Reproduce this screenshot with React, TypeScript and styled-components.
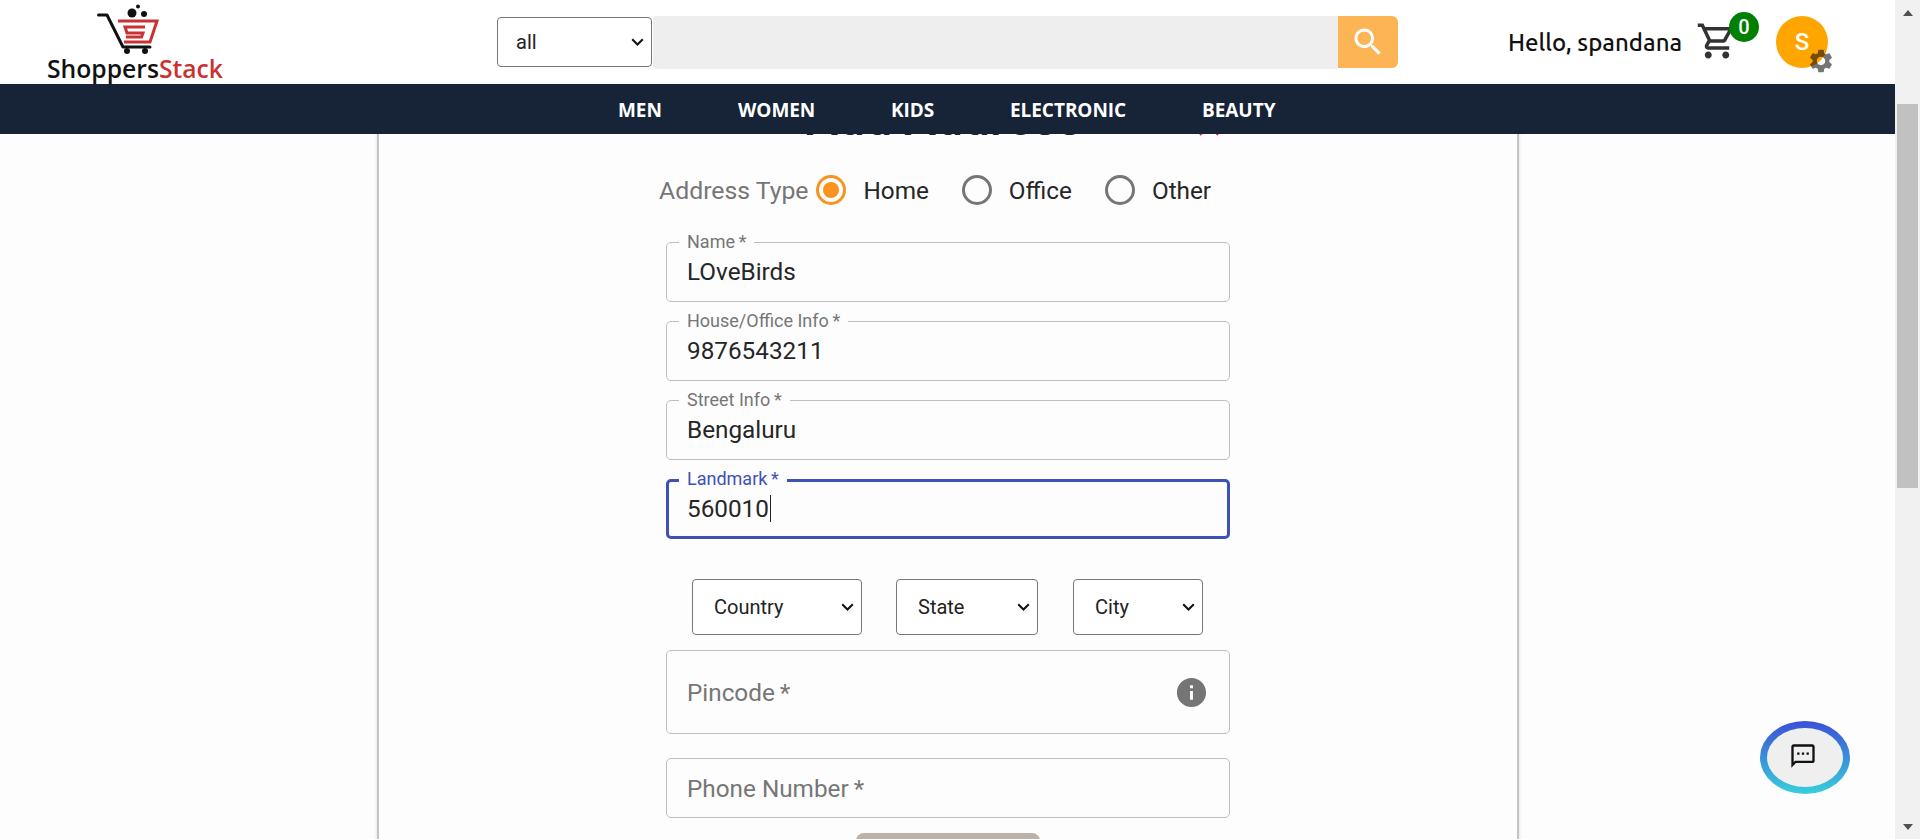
import React from "react";
import styled, { createGlobalStyle } from "styled-components";

const chevron =
  "url(\"data:image/svg+xml,%3Csvg xmlns='http://www.w3.org/2000/svg' width='13' height='8' viewBox='0 0 13 8'%3E%3Cpath d='M1.2 1.2 6.5 6.5 11.8 1.2' fill='none' stroke='%23111' stroke-width='2'/%3E%3C/svg%3E\")";

const Global = createGlobalStyle`
  html, body { margin: 0; padding: 0; height: 100%; overflow: hidden; background: #fdfdfd; }
  * { box-sizing: border-box; }
  body { font-family: "Roboto", "Liberation Sans", sans-serif; }
`;

const Page = styled.div`
  display: flex;
  width: 1920px;
  height: 839px;
  overflow: hidden;
  position: relative;
`;
const Main = styled.div`
  flex: 1;
  min-width: 0;
  display: flex;
  flex-direction: column;
`;
const Header = styled.header`
  height: 84px;
  flex: none;
  background: #fff;
  display: flex;
  align-items: center;
`;
const LogoBox = styled.div`
  width: 224px;
  flex: none;
  margin-left: 23px;
  margin-right: 250px;
  display: flex;
  flex-direction: column;
  align-items: center;
`;
const LogoMark = styled.svg`
  width: 62px;
  height: 52px;
  margin-left: -14px;
  flex: none;
`;
const LogoText = styled.div`
  font-family: "Open Sans", sans-serif;
  font-weight: 600;
  font-size: 24.7px;
  line-height: 24px;
  color: #111;
  margin-top: 1px;
  white-space: nowrap;
`;
const LogoRed = styled.span`
  color: #c93232;
`;
const SearchWrap = styled.div`
  display: flex;
  align-items: center;
  width: 901px;
  margin-right: 110px;
  flex: none;
`;
const CategorySelect = styled.select`
  appearance: none;
  width: 155px;
  height: 50px;
  background: #fff ${chevron} no-repeat right 7px center;
  border: 1px solid #767676;
  border-radius: 4px;
  font-family: "Roboto", sans-serif;
  font-size: 20px;
  color: #222;
  padding-left: 18px;
  flex: none;
`;
const SearchInput = styled.div`
  flex: 1;
  height: 53px;
  background: #eeeeee;
  border-radius: 4px 0 0 4px;
  margin-left: 1px;
`;
const SearchButton = styled.button`
  width: 60px;
  height: 52px;
  border: 0;
  padding: 0;
  background: #fcb455;
  border-radius: 0 6px 6px 0;
  display: flex;
  align-items: center;
  justify-content: center;
  flex: none;
`;
const Hello = styled.div`
  font-family: "Ubuntu", "Noto Sans", sans-serif;
  font-size: 24px;
  font-weight: 500;
  color: #111;
  white-space: nowrap;
  width: 188px;
  flex: none;
`;
const CartBox = styled.div`
  position: relative;
  width: 42px;
  height: 42px;
  flex: none;
  margin-right: 38px;
  margin-top: -2px;
`;
const CartBadge = styled.div`
  position: absolute;
  left: 33px;
  top: -8px;
  width: 30px;
  height: 30px;
  border-radius: 50%;
  background: #008000;
  color: #fff;
  font-size: 20px;
  font-weight: 500;
  display: flex;
  align-items: center;
  justify-content: center;
`;
const Avatar = styled.div`
  position: relative;
  width: 52px;
  height: 52px;
  border-radius: 50%;
  background: #ffa500;
  color: #fff;
  font-size: 24px;
  font-weight: 500;
  display: flex;
  align-items: center;
  justify-content: center;
  flex: none;
`;
const GearIcon = styled.svg`
  position: absolute;
  left: 31px;
  top: 31px;
  width: 28px;
  height: 28px;
  fill: rgba(0, 0, 0, 0.54);
`;
const Nav = styled.nav`
  height: 50px;
  flex: none;
  background: #172337;
  display: flex;
  align-items: center;
  padding: 1px 0 0 618px;
  position: relative;
  z-index: 2;
`;
const NavItem = styled.a<{ $w: number }>`
  width: ${(p) => p.$w}px;
  flex: none;
  color: #fff;
  font-family: "Open Sans", sans-serif;
  font-weight: 700;
  font-size: 19px;
  letter-spacing: -0.05px;
  white-space: nowrap;
`;
const Content = styled.main`
  flex: 1;
  min-height: 0;
  overflow: hidden;
  background: #fdfdfd;
`;
const Card = styled.section`
  position: relative;
  width: 1142px;
  height: 900px;
  margin: -38px 0 0 377px;
  border: solid #c4c4c4;
  border-width: 0 2px;
  box-shadow: 0 0 3px rgba(0, 0, 0, 0.15);
  background: #fdfdfd;
  display: flex;
  flex-direction: column;
  align-items: center;
`;
const Title = styled.h2`
  margin: 0 8px 0 0;
  height: 46px;
  font-size: 48px;
  line-height: 46px;
  font-weight: 500;
  color: #222;
  white-space: nowrap;
`;
const CloseMark = styled.svg`
  position: absolute;
  left: 820px;
  top: 20px;
  width: 20px;
  height: 20px;
  stroke: #e91e63;
  stroke-width: 2;
  fill: none;
`;
const Form = styled.form`
  width: 564px;
  display: flex;
  flex-direction: column;
`;
const TypeRow = styled.div`
  display: flex;
  align-items: center;
  height: 40px;
  margin: 28px 0 0 -7px;
  font-size: 24.3px;
`;
const TypeLabel = styled.span`
  color: #767676;
  font-size: 24.8px;
  margin-right: 8px;
`;
const Radio = styled.span<{ $on?: boolean }>`
  width: 30px;
  height: 30px;
  border-radius: 50%;
  border: 3px solid ${(p) => (p.$on ? "#f7931e" : "#757575")};
  display: flex;
  align-items: center;
  justify-content: center;
  flex: none;
  &::after {
    content: "";
    display: ${(p) => (p.$on ? "block" : "none")};
    width: 16px;
    height: 16px;
    border-radius: 50%;
    background: #f7931e;
  }
`;
const RadioText = styled.span<{ $gap: number }>`
  color: #262626;
  margin: 0 ${(p) => p.$gap}px 0 17px;
`;
const Field = styled.div<{ $focus?: boolean; $h?: number; $mt: number }>`
  position: relative;
  margin-top: ${(p) => p.$mt}px;
  padding: 0 20px;
  height: ${(p) => p.$h ?? 60}px;
  border: ${(p) => (p.$focus ? "3px solid #3f51b5" : "1px solid #bfbfbf")};
  border-radius: 5px;
  display: flex;
  align-items: center;
`;
const FieldLabel = styled.label<{ $focus?: boolean }>`
  position: absolute;
  top: ${(p) => (p.$focus ? "-12px" : "-10px")};
  left: ${(p) => (p.$focus ? "10px" : "12px")};
  padding: 0 8px;
  background: #fdfdfd;
  font-size: 18px;
  line-height: 18px;
  color: ${(p) => (p.$focus ? "#3f51b5" : "#767676")};
  white-space: nowrap;
`;
const FieldValue = styled.span<{ $focus?: boolean }>`
  font-size: 24.3px;
  color: #262626;
  margin: -2px 0 0 ${(p) => (p.$focus ? "-2px" : "0")};
  display: flex;
  align-items: center;
  ${(p) =>
    p.$focus
      ? `&::after { content: ""; width: 1px; height: 27px; background: #222; margin-left: 1px; }`
      : ""}
`;
const Placeholder = styled.span`
  font-size: 24.3px;
  color: #767676;
  flex: 1;
`;
const InfoIcon = styled.svg`
  width: 35px;
  height: 35px;
  fill: #757575;
  flex: none;
`;
const SelectRow = styled.div`
  display: flex;
  margin: 40px 0 15px;
  padding-left: 26px;
`;
const PlainSelect = styled.select<{ $w: number; $mr: number }>`
  appearance: none;
  width: ${(p) => p.$w}px;
  height: 56px;
  margin-right: ${(p) => p.$mr}px;
  background: #fff ${chevron} no-repeat right 7px center;
  border: 1px solid #767676;
  border-radius: 4px;
  font-family: "Roboto", sans-serif;
  font-size: 20px;
  color: #222;
  padding-left: 21px;
  flex: none;
`;
const Submit = styled.button`
  align-self: center;
  width: 184px;
  height: 46px;
  margin-top: 15px;
  border: 0;
  border-radius: 8px;
  background: #bdb2a9;
`;
const ChatFab = styled.button`
  position: absolute;
  left: 1760px;
  top: 721px;
  width: 90px;
  height: 73px;
  padding: 0;
  border: 0;
  border-radius: 50%;
  background: linear-gradient(180deg, #3b50d6 0%, #38cfdc 100%);
  display: flex;
  align-items: center;
  justify-content: center;
`;
const ChatInner = styled.span`
  width: 76px;
  height: 59px;
  border-radius: 50%;
  background: #efefef;
  display: flex;
  align-items: center;
  justify-content: center;
`;
const ChatIcon = styled.svg`
  width: 28px;
  height: 28px;
  fill: #111;
  margin: -3px 0 0 -4px;
`;
const ScrollTrack = styled.div`
  width: 25px;
  flex: none;
  background: #f1f1f1;
  display: flex;
  flex-direction: column;
  align-items: center;
  position: relative;
  z-index: 3;
`;
const ScrollArrow = styled.div<{ $down?: boolean }>`
  height: 25px;
  width: 25px;
  flex: none;
  display: flex;
  align-items: center;
  justify-content: center;
  &::after {
    content: "";
    border-left: 5.5px solid transparent;
    border-right: 5.5px solid transparent;
    ${(p) => (p.$down ? "border-top: 6px solid #505050;" : "border-bottom: 6px solid #505050;")}
  }
`;
const ScrollGap = styled.div<{ $h?: number }>`
  ${(p) => (p.$h ? `height: ${p.$h}px; flex: none;` : "flex: 1;")}
`;
const ScrollThumb = styled.div`
  width: 21px;
  height: 384px;
  flex: none;
  background: #c1c1c1;
`;

const Logo = () => (
  <LogoMark viewBox="0 0 62 52">
    <circle cx="35" cy="9" r="4.5" fill="#111" />
    <circle cx="47" cy="10" r="3" fill="#111" />
    <circle cx="41" cy="2.5" r="2" fill="#111" />
    <path d="M1.5 11H10L26 43H53" fill="none" stroke="#111" strokeWidth="3" strokeLinecap="round" strokeLinejoin="round" />
    <circle cx="30" cy="47" r="3" fill="#111" />
    <circle cx="48" cy="47" r="3" fill="#111" />
    <path d="M21 17H60L53 38H27" fill="none" stroke="#c93232" strokeWidth="3" />
    <path d="M48 23H28L30 29H46L44.5 33H29" fill="none" stroke="#c93232" strokeWidth="3" />
  </LogoMark>
);

export default function App() {
  return (
    <Page>
      <Global />
      <Main>
        <Header>
          <LogoBox>
            <Logo />
            <LogoText>
              Shoppers<LogoRed>Stack</LogoRed>
            </LogoText>
          </LogoBox>
          <SearchWrap>
            <CategorySelect defaultValue="all">
              <option>all</option>
            </CategorySelect>
            <SearchInput />
            <SearchButton aria-label="search">
              <svg width="36" height="36" viewBox="0 0 24 24" fill="#fff">
                <path d="M15.5 14h-.79l-.28-.27C15.41 12.59 16 11.11 16 9.5 16 5.91 13.09 3 9.5 3S3 5.91 3 9.5 5.91 16 9.5 16c1.61 0 3.09-.59 4.23-1.57l.27.28v.79l5 4.99L20.49 19l-4.99-5zm-6 0C7.01 14 5 11.99 5 9.5S7.01 5 9.5 5 14 7.01 14 9.5 11.99 14 9.5 14z" />
              </svg>
            </SearchButton>
          </SearchWrap>
          <Hello>Hello, spandana</Hello>
          <CartBox>
            <svg width="42" height="42" viewBox="0 0 24 24" fill="#333">
              <path d="M15.55 13c.75 0 1.41-.41 1.75-1.03l3.58-6.49c.37-.66-.11-1.48-.87-1.48H5.21l-.94-2H1v2h2l3.6 7.59-1.35 2.44C4.52 15.37 5.48 17 7 17h12v-2H7l1.1-2h7.45zM6.16 6h12.15l-2.76 5H8.53L6.16 6zM7 18c-1.1 0-1.99.9-1.99 2S5.9 22 7 22s2-.9 2-2-.9-2-2-2zm10 0c-1.1 0-1.99.9-1.99 2s.89 2 1.99 2 2-.9 2-2-.9-2-2-2z" />
            </svg>
            <CartBadge>0</CartBadge>
          </CartBox>
          <Avatar>
            S
            <GearIcon viewBox="0 0 24 24">
              <path d="M19.14 12.94c.04-.3.06-.61.06-.94 0-.32-.02-.64-.07-.94l2.03-1.58c.18-.14.23-.41.12-.61l-1.92-3.32c-.12-.22-.37-.29-.59-.22l-2.39.96c-.5-.38-1.03-.7-1.62-.94l-.36-2.54c-.04-.24-.24-.41-.48-.41h-3.84c-.24 0-.43.17-.47.41l-.36 2.54c-.59.24-1.13.57-1.62.94l-2.39-.96c-.22-.08-.47 0-.59.22L2.74 8.87c-.12.21-.08.47.12.61l2.03 1.58c-.05.3-.09.63-.09.94s.02.64.07.94l-2.03 1.58c-.18.14-.23.41-.12.61l1.92 3.32c.12.22.37.29.59.22l2.39-.96c.5.38 1.03.7 1.62.94l.36 2.54c.05.24.24.41.48.41h3.84c.24 0 .44-.17.47-.41l.36-2.54c.59-.24 1.13-.56 1.62-.94l2.39.96c.22.08.47 0 .59-.22l1.92-3.32c.12-.22.07-.47-.12-.61l-2.01-1.58zM12 15.6c-1.98 0-3.6-1.62-3.6-3.6s1.62-3.6 3.6-3.6 3.6 1.62 3.6 3.6-1.62 3.6-3.6 3.6z" />
            </GearIcon>
          </Avatar>
        </Header>
        <Nav>
          <NavItem $w={120}>MEN</NavItem>
          <NavItem $w={153}>WOMEN</NavItem>
          <NavItem $w={119}>KIDS</NavItem>
          <NavItem $w={192}>ELECTRONIC</NavItem>
          <NavItem $w={80}>BEAUTY</NavItem>
        </Nav>
        <Content>
          <Card>
            <Title>Add Address</Title>
            <CloseMark viewBox="0 0 20 20">
              <path d="M1 1 19 19M19 1 1 19" />
            </CloseMark>
            <Form>
              <TypeRow>
                <TypeLabel>Address Type</TypeLabel>
                <Radio $on />
                <RadioText $gap={33}>Home</RadioText>
                <Radio />
                <RadioText $gap={33}>Office</RadioText>
                <Radio />
                <RadioText $gap={0}>Other</RadioText>
              </TypeRow>
              <Field $mt={32}>
                <FieldLabel>Name{"\u2009"}*</FieldLabel>
                <FieldValue>LOveBirds</FieldValue>
              </Field>
              <Field $mt={19}>
                <FieldLabel>House/Office Info{"\u2009"}*</FieldLabel>
                <FieldValue>9876543211</FieldValue>
              </Field>
              <Field $mt={19}>
                <FieldLabel>Street Info{"\u2009"}*</FieldLabel>
                <FieldValue>Bengaluru</FieldValue>
              </Field>
              <Field $mt={19} $focus>
                <FieldLabel $focus>Landmark{"\u2009"}*</FieldLabel>
                <FieldValue $focus>560010</FieldValue>
              </Field>
              <SelectRow>
                <PlainSelect $w={170} $mr={34} defaultValue="Country">
                  <option>Country</option>
                </PlainSelect>
                <PlainSelect $w={142} $mr={35} defaultValue="State">
                  <option>State</option>
                </PlainSelect>
                <PlainSelect $w={130} $mr={0} defaultValue="City">
                  <option>City</option>
                </PlainSelect>
              </SelectRow>
              <Field $mt={0} $h={84}>
                <Placeholder>Pincode{"\u2009"}*</Placeholder>
                <InfoIcon viewBox="0 0 24 24">
                  <path d="M12 2C6.48 2 2 6.48 2 12s4.48 10 10 10 10-4.48 10-10S17.52 2 12 2zm1 15h-2v-6h2v6zm0-8h-2V7h2v2z" />
                </InfoIcon>
              </Field>
              <Field $mt={24}>
                <Placeholder>Phone Number{"\u2009"}*</Placeholder>
              </Field>
              <Submit type="button" aria-label="submit" />
            </Form>
          </Card>
        </Content>
      </Main>
      <ScrollTrack>
        <ScrollArrow />
        <ScrollGap $h={79} />
        <ScrollThumb />
        <ScrollGap />
        <ScrollArrow $down />
      </ScrollTrack>
      <ChatFab aria-label="chat">
        <ChatInner>
          <ChatIcon viewBox="0 0 24 24">
            <path d="M20 2H4c-1.1 0-2 .9-2 2v18l4-4h14c1.1 0 2-.9 2-2V4c0-1.1-.9-2-2-2zm0 14H5.17L4 17.17V4h16v12zM7 9h2v2H7zm4 0h2v2h-2zm4 0h2v2h-2z" />
          </ChatIcon>
        </ChatInner>
      </ChatFab>
    </Page>
  );
}
